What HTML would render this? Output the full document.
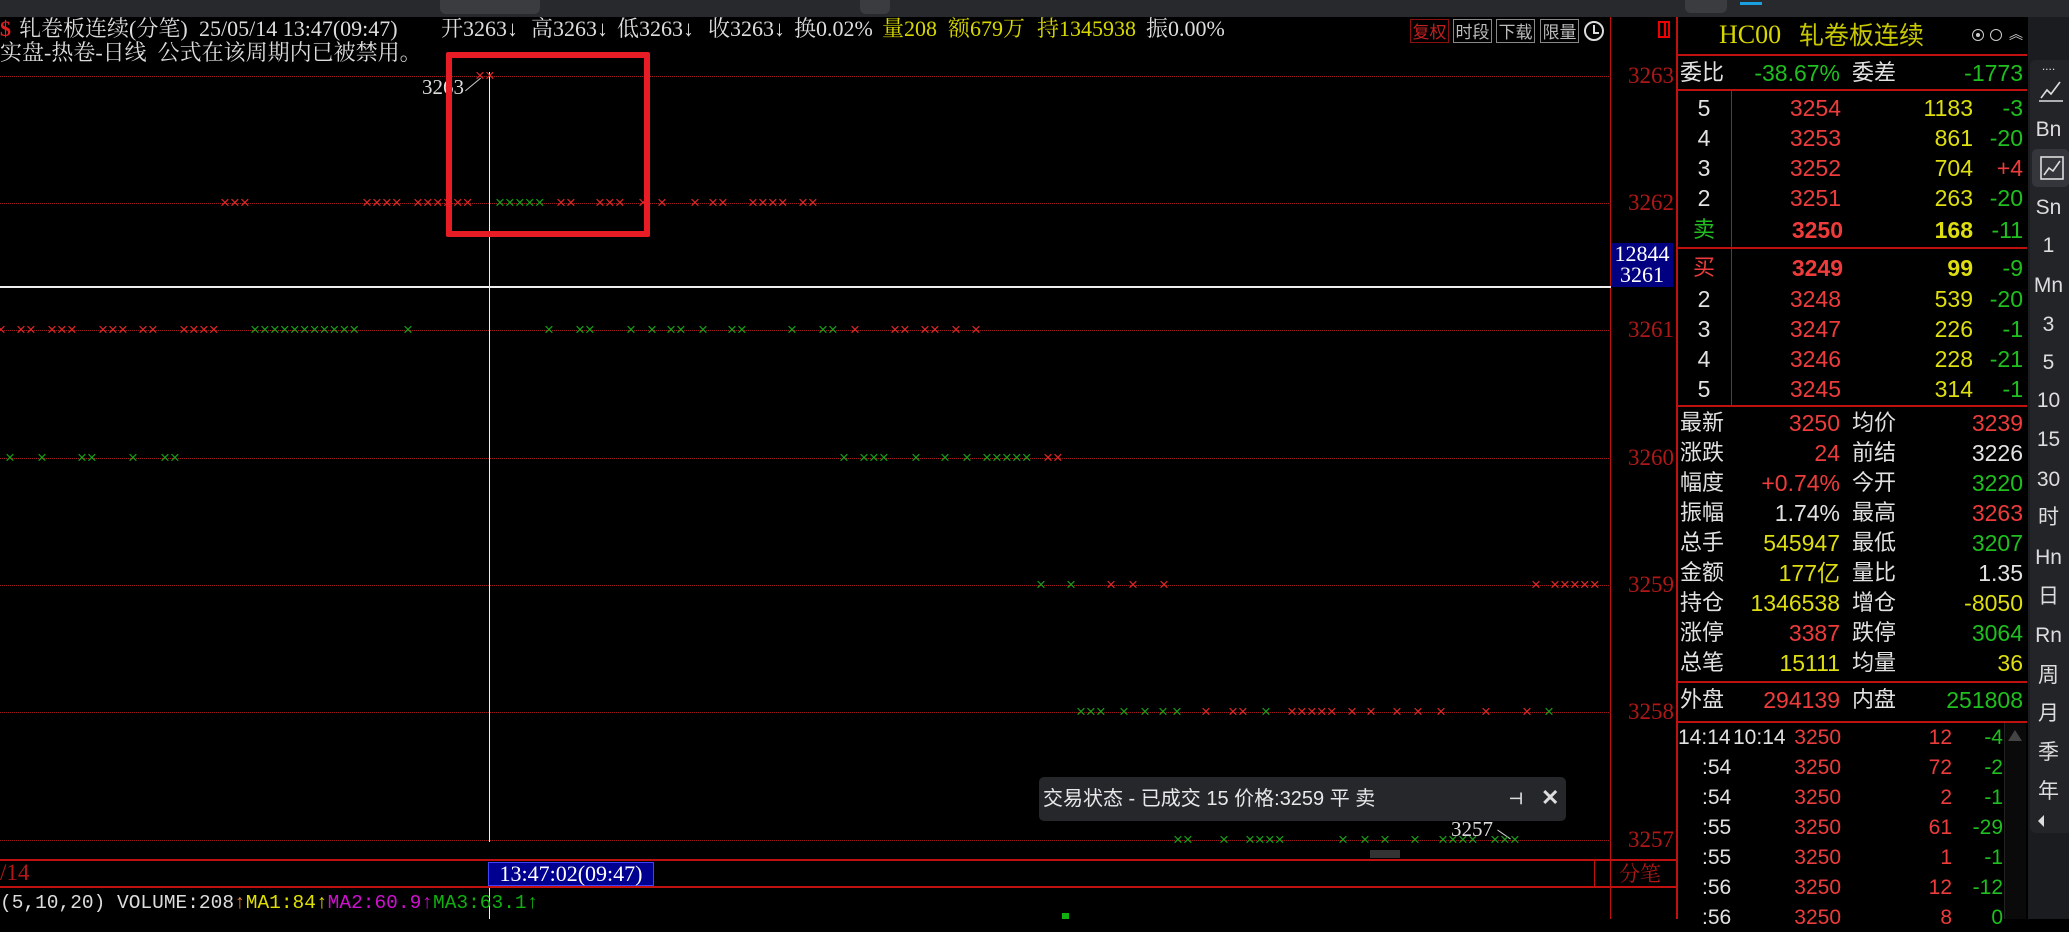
<!DOCTYPE html>
<html><head><meta charset="utf-8"><style>
*{margin:0;padding:0;box-sizing:border-box}
body{width:2069px;height:919px;background:#000;overflow:hidden;position:relative;font-family:"Liberation Sans","Noto Sans CJK SC",sans-serif;color:#ddd}
.abs{position:absolute}
.tb{position:absolute;left:0;top:0;width:2069px;height:17px;background:#27292d}
.dot{position:absolute;left:0;width:1611px;height:0;border-top:1px dotted #a01818}
.lab{position:absolute;width:64px;text-align:right;color:#b01818;font-family:"Liberation Serif",serif;font-size:23px;line-height:24px}
.m{position:absolute;font-size:17px;line-height:20px;height:20px;white-space:pre;font-family:"Liberation Sans",sans-serif}
.r1{color:#e02828}.g1{color:#18a018}
.hd{position:absolute;top:17px;font-family:"Liberation Serif","Noto Serif CJK SC",serif;font-size:22px;line-height:24px;color:#ddd;white-space:nowrap}
.btn{position:absolute;top:19px;height:24px;border:1px solid #888;color:#bbb;font-size:17px;line-height:22px;text-align:center;font-family:"Noto Sans CJK SC",sans-serif}
.row{position:absolute;left:1677px;width:350px;height:28px;line-height:28px;font-size:23px}
.row.tk{font-size:21px}
.row span{position:absolute;white-space:nowrap}
.cj{font-family:"Liberation Sans","Noto Sans CJK SC",sans-serif;font-size:22px}
.R{color:#ee3c3c}.Y{color:#dede10}.G{color:#1fbf1f}.W{color:#e2e2e2}
.hl{position:absolute;background:#c01010;height:2px}
.sb{position:absolute;left:2028px;width:41px;text-align:center;color:#ddd;font-size:21px;line-height:24px}
</style></head><body>
<div class="tb"></div>
<div class="abs" style="left:440px;top:0;width:100px;height:14px;background:#3a3c40;border-radius:0 0 6px 6px"></div>
<div class="abs" style="left:860px;top:0;width:30px;height:14px;background:#3a3c40;border-radius:0 0 6px 6px"></div>
<div class="abs" style="left:1685px;top:0;width:42px;height:13px;background:#3a3c40;border-radius:0 0 6px 6px"></div>
<div class="abs" style="left:1740px;top:2px;width:22px;height:3px;background:#1aa0e0"></div>

<div class="hd" style="left:0;color:#e02020;font-weight:bold">$</div>
<div class="hd" style="left:19px">轧卷板连续(分笔)</div>
<div class="hd" style="left:199px">25/05/14 13:47(09:47)</div>
<div class="hd" style="left:441px">开3263↓</div>
<div class="hd" style="left:531px">高3263↓</div>
<div class="hd" style="left:617px">低3263↓</div>
<div class="hd" style="left:708px">收3263↓</div>
<div class="hd" style="left:794px">换0.02%</div>
<div class="hd" style="left:882px;color:#d8d800">量208</div>
<div class="hd" style="left:948px;color:#d8d800">额679万</div>
<div class="hd" style="left:1037px;color:#d8d800">持1345938</div>
<div class="hd" style="left:1146px">振0.00%</div>
<div class="hd" style="left:0;top:41px">实盘-热卷-日线&nbsp;&nbsp;公式在该周期内已被禁用。</div>
<div class="btn" style="left:1410px;width:39px;border-color:#8a1010;color:#c02020">复权</div>
<div class="btn" style="left:1453px;width:39px">时段</div>
<div class="btn" style="left:1496px;width:39px">下载</div>
<div class="btn" style="left:1540px;width:39px">限量</div>
<div class="abs" style="left:1584px;top:21px;width:20px;height:20px;border:2px solid #ddd;border-radius:50%"></div>
<div class="abs" style="left:1593px;top:25px;width:2px;height:8px;background:#ddd"></div>
<div class="abs" style="left:1593px;top:32px;width:6px;height:2px;background:#ddd"></div>
<div class="abs" style="left:1658px;top:21px;width:12px;height:17px;border:2px solid #e00"></div>
<div class="abs" style="left:1664px;top:21px;width:2px;height:17px;background:#e00"></div>

<div class="abs" style="left:1610px;top:17px;width:1px;height:902px;background:#c01010"></div>
<div class="abs" style="left:1676px;top:17px;width:2px;height:902px;background:#c01010"></div>
<div class="dot" style="top:76px"></div>
<div class="dot" style="top:203px"></div>
<div class="dot" style="top:330px"></div>
<div class="dot" style="top:458px"></div>
<div class="dot" style="top:585px"></div>
<div class="dot" style="top:712px"></div>
<div class="dot" style="top:840px"></div>
<div class="lab" style="top:64px;left:1610px">3263</div>
<div class="lab" style="top:191px;left:1610px">3262</div>
<div class="lab" style="top:318px;left:1610px">3261</div>
<div class="lab" style="top:446px;left:1610px">3260</div>
<div class="lab" style="top:573px;left:1610px">3259</div>
<div class="lab" style="top:700px;left:1610px">3258</div>
<div class="lab" style="top:828px;left:1610px">3257</div>
<div class="abs" style="left:1611px;top:243px;width:62px;height:44px;background:#000080;color:#fff;font-family:'Liberation Serif',serif;font-size:22px;line-height:21px;text-align:center">12844<br>3261</div>
<div class="abs" style="left:0;top:286px;width:1611px;height:2px;background:#eee"></div>
<div class="abs" style="left:489px;top:72px;width:1px;height:770px;background:#eee"></div>
<div class="abs" style="left:489px;top:887px;width:1px;height:32px;background:#eee"></div>
<div class="abs" style="left:422px;top:75px;font-family:'Liberation Serif',serif;font-size:21px;color:#ddd">3263</div>
<div class="abs" style="left:463px;top:84px;width:20px;height:1px;background:#ccc;transform:rotate(-40deg)"></div>
<div class="abs" style="left:1451px;top:817px;font-family:'Liberation Serif',serif;font-size:21px;color:#ddd">3257</div>
<div class="abs" style="left:1496px;top:834px;width:16px;height:1px;background:#ccc;transform:rotate(35deg)"></div>

<div class="m r1" style="left:475px;top:66px">××</div>
<div class="m r1" style="left:220px;top:193px">×××</div>
<div class="m r1" style="left:362px;top:193px">××××</div>
<div class="m r1" style="left:413px;top:193px">××××××</div>
<div class="m g1" style="left:495px;top:193px">×××××</div>
<div class="m r1" style="left:556px;top:193px">××</div>
<div class="m r1" style="left:595px;top:193px">×××</div>
<div class="m r1" style="left:638px;top:193px">×</div>
<div class="m r1" style="left:657px;top:193px">×</div>
<div class="m r1" style="left:690px;top:193px">×</div>
<div class="m r1" style="left:708px;top:193px">××</div>
<div class="m r1" style="left:748px;top:193px">××××</div>
<div class="m r1" style="left:798px;top:193px">××</div>

<div class="m r1" style="left:-4px;top:320px">×</div>
<div class="m r1" style="left:16px;top:320px">××</div>
<div class="m r1" style="left:47px;top:320px">×××</div>
<div class="m r1" style="left:98px;top:320px">×××</div>
<div class="m r1" style="left:138px;top:320px">××</div>
<div class="m r1" style="left:179px;top:320px">××××</div>
<div class="m g1" style="left:250px;top:320px">×××××××××××</div>
<div class="m g1" style="left:403px;top:320px">×</div>
<div class="m g1" style="left:544px;top:320px">×</div>
<div class="m g1" style="left:575px;top:320px">××</div>
<div class="m g1" style="left:626px;top:320px">×</div>
<div class="m g1" style="left:647px;top:320px">×</div>
<div class="m g1" style="left:666px;top:320px">××</div>
<div class="m g1" style="left:698px;top:320px">×</div>
<div class="m g1" style="left:727px;top:320px">××</div>
<div class="m g1" style="left:787px;top:320px">×</div>
<div class="m g1" style="left:818px;top:320px">××</div>
<div class="m r1" style="left:850px;top:320px">×</div>
<div class="m r1" style="left:890px;top:320px">××</div>
<div class="m r1" style="left:920px;top:320px">××</div>
<div class="m r1" style="left:951px;top:320px">×</div>
<div class="m r1" style="left:971px;top:320px">×</div>

<div class="m g1" style="left:5px;top:448px">×</div>
<div class="m g1" style="left:37px;top:448px">×</div>
<div class="m g1" style="left:77px;top:448px">××</div>
<div class="m g1" style="left:128px;top:448px">×</div>
<div class="m g1" style="left:160px;top:448px">××</div>
<div class="m g1" style="left:839px;top:448px">×</div>
<div class="m g1" style="left:859px;top:448px">×××</div>
<div class="m g1" style="left:911px;top:448px">×</div>
<div class="m g1" style="left:940px;top:448px">×</div>
<div class="m g1" style="left:962px;top:448px">×</div>
<div class="m g1" style="left:982px;top:448px">×××××</div>
<div class="m r1" style="left:1043px;top:448px">××</div>

<div class="m g1" style="left:1036px;top:575px">×</div>
<div class="m g1" style="left:1066px;top:575px">×</div>
<div class="m r1" style="left:1106px;top:575px">×</div>
<div class="m r1" style="left:1128px;top:575px">×</div>
<div class="m r1" style="left:1159px;top:575px">×</div>
<div class="m r1" style="left:1531px;top:575px">×</div>
<div class="m r1" style="left:1550px;top:575px">×××××</div>

<div class="m g1" style="left:1076px;top:702px">×××</div>
<div class="m g1" style="left:1119px;top:702px">×</div>
<div class="m g1" style="left:1140px;top:702px">×</div>
<div class="m g1" style="left:1158px;top:702px">×</div>
<div class="m g1" style="left:1172px;top:702px">×</div>
<div class="m r1" style="left:1201px;top:702px">×</div>
<div class="m r1" style="left:1228px;top:702px">××</div>
<div class="m g1" style="left:1261px;top:702px">×</div>
<div class="m r1" style="left:1287px;top:702px">×××××</div>
<div class="m r1" style="left:1347px;top:702px">×</div>
<div class="m r1" style="left:1366px;top:702px">×</div>
<div class="m r1" style="left:1392px;top:702px">×</div>
<div class="m r1" style="left:1413px;top:702px">×</div>
<div class="m r1" style="left:1436px;top:702px">×</div>
<div class="m r1" style="left:1481px;top:702px">×</div>
<div class="m r1" style="left:1522px;top:702px">×</div>
<div class="m g1" style="left:1544px;top:702px">×</div>

<div class="m g1" style="left:1173px;top:830px">××</div>
<div class="m g1" style="left:1219px;top:830px">×</div>
<div class="m g1" style="left:1245px;top:830px">××××</div>
<div class="m g1" style="left:1338px;top:830px">×</div>
<div class="m g1" style="left:1360px;top:830px">×</div>
<div class="m g1" style="left:1380px;top:830px">×</div>
<div class="m g1" style="left:1410px;top:830px">×</div>
<div class="m g1" style="left:1438px;top:830px">××××</div>
<div class="m g1" style="left:1490px;top:830px">×××</div>

<div class="abs" style="left:446px;top:52px;width:204px;height:185px;border:6px solid #e81c24;border-radius:2px"></div>

<div class="abs" style="left:1039px;top:777px;width:527px;height:44px;background:#25272b;border-radius:5px;color:#e8e8e8;font-family:'Liberation Sans','Noto Sans CJK SC',sans-serif;font-size:20px;line-height:44px;padding-left:4px;white-space:nowrap">交易状态 - 已成交 15 价格:3259 平 卖</div>
<div class="abs" style="left:1509px;top:789px;color:#ddd;font-size:16px;font-weight:bold">⊣</div>
<div class="abs" style="left:1541px;top:785px;color:#ddd;font-size:22px;font-weight:bold">✕</div>
<div class="abs" style="left:1370px;top:850px;width:30px;height:8px;background:#333"></div>

<div class="hl" style="left:0;top:859px;width:1677px"></div>
<div class="hl" style="left:0;top:886px;width:1677px"></div>
<div class="abs" style="left:1594px;top:860px;width:1px;height:27px;background:#c01010"></div>
<div class="abs" style="left:0;top:860px;font-family:'Liberation Serif',serif;font-size:23px;color:#b01818">/14</div>
<div class="abs" style="left:1619px;top:860px;font-family:'Noto Serif CJK SC',serif;font-size:21px;color:#b01818;line-height:26px">分笔</div>
<div class="abs" style="left:488px;top:862px;width:166px;height:24px;background:#000090;border:1px solid #4040ff;color:#fff;font-family:'Liberation Serif',serif;font-size:22px;line-height:22px;text-align:center;white-space:nowrap">13:47:02(09:47)</div>
<div class="abs" style="left:0;top:891px;font-family:'Liberation Mono',monospace;font-size:19.5px;line-height:24px;white-space:nowrap"><span style="color:#ddd">(5,10,20) VOLUME:208</span><span style="color:#e08030">↑</span><span style="color:#e0e000">MA1:84</span><span style="color:#e0e000">↑</span><span style="color:#d010d0">MA2:60.9</span><span style="color:#d010d0">↑</span><span style="color:#10b010">MA3:63.1</span><span style="color:#10b010">↑</span></div>
<div class="abs" style="left:1062px;top:913px;width:7px;height:6px;background:#10b010"></div>

<div class="hl" style="left:1677px;top:54px;width:350px"></div>
<div class="hl" style="left:1677px;top:89px;width:350px"></div>
<div class="hl" style="left:1677px;top:247px;width:350px"></div>
<div class="hl" style="left:1677px;top:405px;width:350px"></div>
<div class="hl" style="left:1677px;top:681px;width:350px"></div>
<div class="hl" style="left:1677px;top:721px;width:350px"></div>
<div class="abs" style="left:1731px;top:90px;width:1px;height:315px;background:#c01010"></div>
<div class="abs" style="left:2004px;top:723px;width:22px;height:196px;background:#0a0a0a;border-left:1px solid #222"></div>
<div class="abs" style="left:2008px;top:730px;width:0;height:0;border-left:7px solid transparent;border-right:7px solid transparent;border-bottom:11px solid #444"></div>

<div class="abs" style="left:1719px;top:20px;font-family:'Liberation Serif',serif;font-size:26px;line-height:30px;color:#d8d800">HC00</div>
<div class="abs" style="left:1799px;top:18px;font-family:'Noto Sans CJK SC',sans-serif;font-size:25px;line-height:32px;color:#c8c800">轧卷板连续</div>
<div class="abs" style="left:1972px;top:29px;width:12px;height:12px;border:1.5px solid #ccc;border-radius:50%"></div>
<div class="abs" style="left:1976px;top:33px;width:4px;height:4px;background:#ccc;border-radius:50%"></div>
<div class="abs" style="left:1990px;top:29px;width:12px;height:12px;border:1.5px solid #ccc;border-radius:50%"></div>
<div class="abs" style="left:2009px;top:24px;color:#ccc;font-size:14px">︽</div>

<div class="row" style="top:59px"><span class="cj W" style="left:3px">委比</span><span class="G" style="right:187px">-38.67%</span><span class="cj W" style="left:175px">委差</span><span class="G" style="right:4px">-1773</span></div>

<div class="row" style="top:94px"><span class="W" style="left:0;width:54px;text-align:center">5</span><span class="R" style="right:186px">3254</span><span class="Y" style="right:54px">1183</span><span class="G" style="right:4px">-3</span></div>
<div class="row" style="top:124px"><span class="W" style="left:0;width:54px;text-align:center">4</span><span class="R" style="right:186px">3253</span><span class="Y" style="right:54px">861</span><span class="G" style="right:4px">-20</span></div>
<div class="row" style="top:154px"><span class="W" style="left:0;width:54px;text-align:center">3</span><span class="R" style="right:186px">3252</span><span class="Y" style="right:54px">704</span><span class="R" style="right:4px">+4</span></div>
<div class="row" style="top:184px"><span class="W" style="left:0;width:54px;text-align:center">2</span><span class="R" style="right:186px">3251</span><span class="Y" style="right:54px">263</span><span class="G" style="right:4px">-20</span></div>
<div class="row" style="top:216px;font-weight:bold"><span class="cj G" style="left:0;width:54px;text-align:center;font-weight:normal">卖</span><span class="R" style="right:184px">3250</span><span class="Y" style="right:54px">168</span><span class="G" style="right:4px;font-weight:normal">-11</span></div>
<div class="row" style="top:254px;font-weight:bold"><span class="cj R" style="left:0;width:54px;text-align:center;font-weight:normal">买</span><span class="R" style="right:184px">3249</span><span class="Y" style="right:54px">99</span><span class="G" style="right:4px;font-weight:normal">-9</span></div>
<div class="row" style="top:285px"><span class="W" style="left:0;width:54px;text-align:center">2</span><span class="R" style="right:186px">3248</span><span class="Y" style="right:54px">539</span><span class="G" style="right:4px">-20</span></div>
<div class="row" style="top:315px"><span class="W" style="left:0;width:54px;text-align:center">3</span><span class="R" style="right:186px">3247</span><span class="Y" style="right:54px">226</span><span class="G" style="right:4px">-1</span></div>
<div class="row" style="top:345px"><span class="W" style="left:0;width:54px;text-align:center">4</span><span class="R" style="right:186px">3246</span><span class="Y" style="right:54px">228</span><span class="G" style="right:4px">-21</span></div>
<div class="row" style="top:375px"><span class="W" style="left:0;width:54px;text-align:center">5</span><span class="R" style="right:186px">3245</span><span class="Y" style="right:54px">314</span><span class="G" style="right:4px">-1</span></div>

<div class="row" style="top:409px"><span class="cj W" style="left:3px">最新</span><span class="R" style="right:187px">3250</span><span class="cj W" style="left:175px">均价</span><span class="R" style="right:4px">3239</span></div>
<div class="row" style="top:439px"><span class="cj W" style="left:3px">涨跌</span><span class="R" style="right:187px">24</span><span class="cj W" style="left:175px">前结</span><span class="W" style="right:4px">3226</span></div>
<div class="row" style="top:469px"><span class="cj W" style="left:3px">幅度</span><span class="R" style="right:187px">+0.74%</span><span class="cj W" style="left:175px">今开</span><span class="G" style="right:4px">3220</span></div>
<div class="row" style="top:499px"><span class="cj W" style="left:3px">振幅</span><span class="W" style="right:187px">1.74%</span><span class="cj W" style="left:175px">最高</span><span class="R" style="right:4px">3263</span></div>
<div class="row" style="top:529px"><span class="cj W" style="left:3px">总手</span><span class="Y" style="right:187px">545947</span><span class="cj W" style="left:175px">最低</span><span class="G" style="right:4px">3207</span></div>
<div class="row" style="top:559px"><span class="cj W" style="left:3px">金额</span><span class="cj Y" style="right:187px;font-size:23px">177亿</span><span class="cj W" style="left:175px">量比</span><span class="W" style="right:4px">1.35</span></div>
<div class="row" style="top:589px"><span class="cj W" style="left:3px">持仓</span><span class="Y" style="right:187px">1346538</span><span class="cj W" style="left:175px">增仓</span><span class="Y" style="right:4px">-8050</span></div>
<div class="row" style="top:619px"><span class="cj W" style="left:3px">涨停</span><span class="R" style="right:187px">3387</span><span class="cj W" style="left:175px">跌停</span><span class="G" style="right:4px">3064</span></div>
<div class="row" style="top:649px"><span class="cj W" style="left:3px">总笔</span><span class="Y" style="right:187px">15111</span><span class="cj W" style="left:175px">均量</span><span class="Y" style="right:4px">36</span></div>
<div class="row" style="top:686px"><span class="cj W" style="left:3px">外盘</span><span class="R" style="right:187px">294139</span><span class="cj W" style="left:175px">内盘</span><span class="G" style="right:4px">251808</span></div>

<div class="row tk" style="top:724px"><span class="W" style="left:1px">14:14</span><span class="W" style="left:56px">10:14</span><span class="R" style="right:186px">3250</span><span class="R" style="right:75px">12</span><span class="G" style="right:24px">-4</span></div>
<div class="row tk" style="top:754px"><span class="W" style="left:25px">:54</span><span class="R" style="right:186px">3250</span><span class="R" style="right:75px">72</span><span class="G" style="right:24px">-2</span></div>
<div class="row tk" style="top:784px"><span class="W" style="left:25px">:54</span><span class="R" style="right:186px">3250</span><span class="R" style="right:75px">2</span><span class="G" style="right:24px">-1</span></div>
<div class="row tk" style="top:814px"><span class="W" style="left:25px">:55</span><span class="R" style="right:186px">3250</span><span class="R" style="right:75px">61</span><span class="G" style="right:24px">-29</span></div>
<div class="row tk" style="top:844px"><span class="W" style="left:25px">:55</span><span class="R" style="right:186px">3250</span><span class="R" style="right:75px">1</span><span class="G" style="right:24px">-1</span></div>
<div class="row tk" style="top:874px"><span class="W" style="left:25px">:56</span><span class="R" style="right:186px">3250</span><span class="R" style="right:75px">12</span><span class="G" style="right:24px">-12</span></div>
<div class="row tk" style="top:904px"><span class="W" style="left:25px">:56</span><span class="R" style="right:186px">3250</span><span class="R" style="right:75px">8</span><span class="G" style="right:24px">0</span></div>

<div class="abs" style="left:2028px;top:17px;width:41px;height:902px;background:#1b1c1f"></div>
<div class="abs" style="left:2030px;top:60px;width:39px;height:773px;background:#232428;border-radius:6px 0 0 6px"></div>
<div class="sb" style="top:54px;font-size:12px">....</div>
<svg class="abs" style="left:2038px;top:78px" width="26" height="24"><path d="M3 20 L9 12 L13 16 L22 4" stroke="#ddd" stroke-width="1.6" fill="none"/><path d="M1 23 H25" stroke="#ddd" stroke-width="1.4"/></svg>
<div class="sb" style="top:118px">Bn</div>
<div class="abs" style="left:2032px;top:149px;width:37px;height:38px;background:#34363b;border-radius:5px"></div>
<svg class="abs" style="left:2040px;top:156px" width="24" height="24"><rect x="1" y="1" width="22" height="22" fill="none" stroke="#ddd" stroke-width="1.6"/><path d="M4 19 L9 12 L13 15 L20 5" stroke="#ddd" stroke-width="1.6" fill="none"/></svg>
<div class="sb" style="top:196px">Sn</div>
<div class="sb" style="top:234px">1</div>
<div class="sb" style="top:274px">Mn</div>
<div class="sb" style="top:313px">3</div>
<div class="sb" style="top:351px">5</div>
<div class="sb" style="top:389px">10</div>
<div class="sb" style="top:428px">15</div>
<div class="sb" style="top:468px">30</div>
<div class="sb cj" style="top:506px">时</div>
<div class="sb" style="top:546px">Hn</div>
<div class="sb cj" style="top:585px">日</div>
<div class="sb" style="top:624px">Rn</div>
<div class="sb cj" style="top:664px">周</div>
<div class="sb cj" style="top:702px">月</div>
<div class="sb cj" style="top:741px">季</div>
<div class="sb cj" style="top:780px">年</div>
<div class="abs" style="left:2038px;top:815px;width:0;height:0;border-top:6px solid transparent;border-bottom:6px solid transparent;border-right:6px solid #ddd"></div>
</body></html>
